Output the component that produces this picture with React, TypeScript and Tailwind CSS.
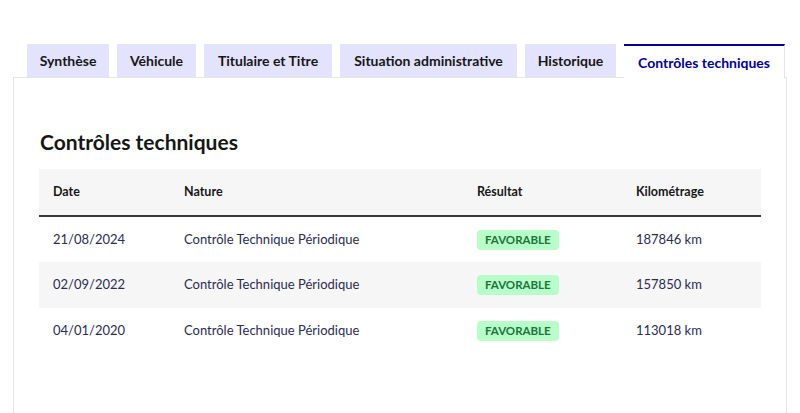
import React from 'react';

const tabs = [
    { label: 'Synthèse', w: 'w-[82px]' },
    { label: 'Véhicule', w: 'w-[79px]' },
    { label: 'Titulaire et Titre', w: 'w-[128px]' },
    { label: 'Situation administrative', w: 'w-[177px]' },
    { label: 'Historique', w: 'w-[91px]' },
    { label: 'Contrôles techniques', w: 'w-[161px]', active: true },
];

const rows = [
    { date: '21/08/2024', nature: 'Contrôle Technique Périodique', result: 'FAVORABLE', km: '187846 km' },
    { date: '02/09/2022', nature: 'Contrôle Technique Périodique', result: 'FAVORABLE', km: '157850 km' },
    { date: '04/01/2020', nature: 'Contrôle Technique Périodique', result: 'FAVORABLE', km: '113018 km' },
];

export default function App() {
    return (
        <div className="w-[800px] h-[413px] overflow-hidden bg-white font-['Lato','Open_Sans',sans-serif] text-[#161616]">
            <div className="pt-[44px] px-[13px]">
                <div className="flex gap-2 pl-[14px] relative z-10">
                    {tabs.map(t => (
                        <div
                            key={t.label}
                            className={
                                t.active
                                    ? `${t.w} h-[34px] -mb-px flex items-center justify-center bg-white border-t-2 border-t-[#000091] border-r border-r-[#e5e5e5] text-[#000091] text-[14px] font-bold`
                                    : `${t.w} h-[33px] flex items-center justify-center bg-[#e3e3fd] text-[#161616] text-[14px] font-bold`
                            }
                        >
                            {t.label}
                        </div>
                    ))}
                </div>
                <div className="border-l border-r border-t border-[#e5e5e5] h-[400px] pt-[50px] pl-[25px] pr-[25px]">
                    <h2 className="text-[21px] leading-[28px] font-bold text-[#161616] mb-[13px] ml-px">Contrôles techniques</h2>
                    <table className="w-full border-collapse text-[13px]">
                        <thead>
                            <tr className="bg-[#f6f6f6] border-b-2 border-[#3a3a3a] h-[47px] text-[12.5px]">
                                <th className="text-left font-bold pl-[14px] w-[145px]">Date</th>
                                <th className="text-left font-bold w-[293px]">Nature</th>
                                <th className="text-left font-bold w-[159px]">Résultat</th>
                                <th className="text-left font-bold">Kilométrage</th>
                            </tr>
                        </thead>
                        <tbody className="text-[#2c2c50]">
                            {rows.map((r, i) => (
                                <tr key={r.date} className={`h-[46px] ${i % 2 === 1 ? 'bg-[#f6f6f6]' : 'bg-white'}`}>
                                    <td className="pl-[14px]">{r.date}</td>
                                    <td>{r.nature}</td>
                                    <td>
                                        <span className="inline-flex items-center h-[20px] px-[8px] rounded-[4px] bg-[#b8fec9] text-[#18753c] text-[11.5px] font-bold">
                                            {r.result}
                                        </span>
                                    </td>
                                    <td>{r.km}</td>
                                </tr>
                            ))}
                        </tbody>
                    </table>
                </div>
            </div>
        </div>
    );
}
